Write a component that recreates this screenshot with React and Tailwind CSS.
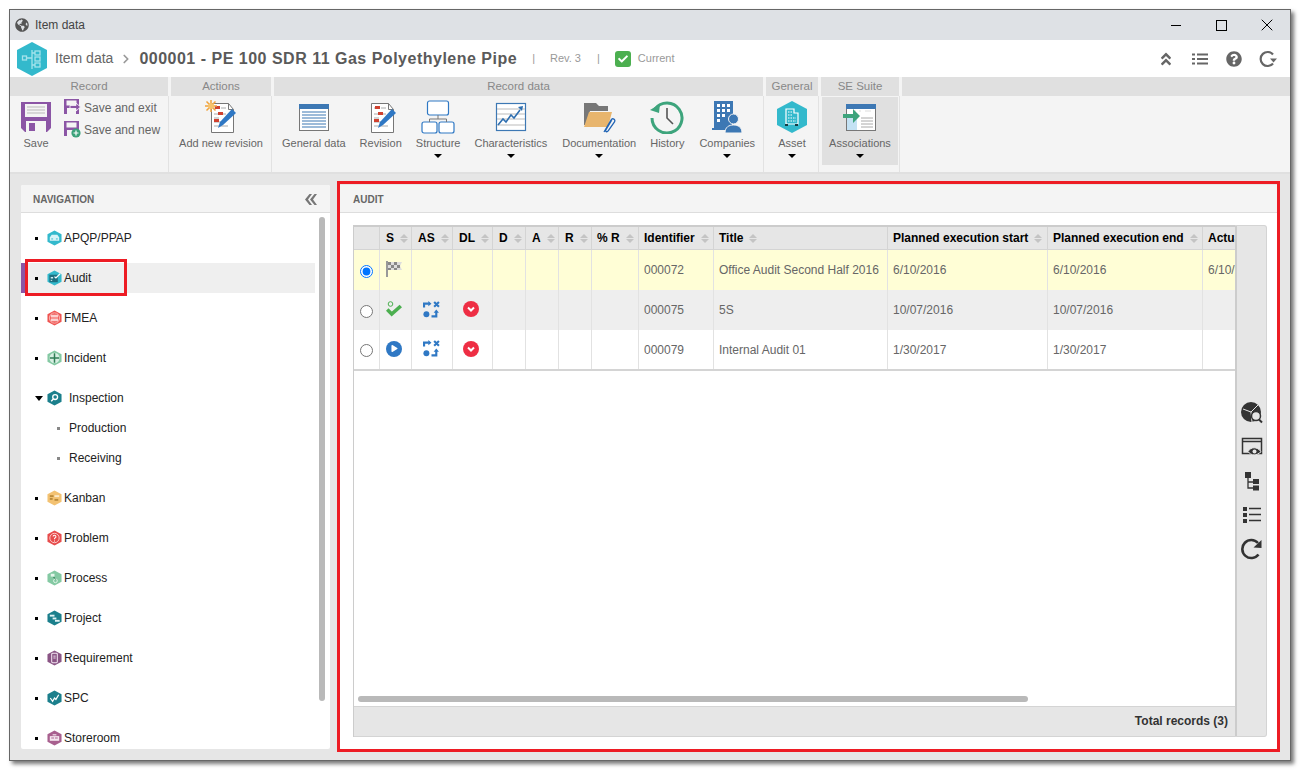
import {
  FaGlobeAmericas,
  FaAngleDoubleUp,
  FaQuestionCircle,
  FaPlay,
  FaCheck,
} from "react-icons/fa";
import { ChevronRight, X } from "lucide-react";

const Hex = ({ fill, children }) => (
  <svg viewBox="0 0 16 16" className="w-[15px] h-[16px] shrink-0">
    <polygon points="8,0 15.5,4 15.5,12 8,16 0.5,12 0.5,4" fill={fill} />
    {children}
  </svg>
);

const navIcons = {
  apqp: (
    <Hex fill="#33b9cc">
      <path d="M3 11V7.500L5 4.500h6L13 7.500V11z" fill="#d8f3f7" />
      <rect x="4.500" y="8.500" width="2" height="1" fill="#33b9cc" />
      <rect x="9.500" y="8.500" width="2" height="1" fill="#33b9cc" />
    </Hex>
  ),
  audit: (
    <Hex fill="#33b9cc">
      <rect x="2.500" y="4.500" width="9" height="8" fill="#1d6f80" />
      <rect x="4" y="7" width="2.500" height="1.500" fill="#d8f3f7" />
      <rect x="4" y="10" width="1.500" height="1" fill="#d8f3f7" />
      <path d="M8 6.500l1.500 1.500L14 3.500" stroke="#fff" strokeWidth="1.300" fill="none" />
    </Hex>
  ),
  fmea: (
    <Hex fill="#ef5350">
      <circle cx="8" cy="8" r="5.500" fill="none" stroke="#fbd0cf" strokeWidth="0.800" />
      <rect x="4" y="4.500" width="8" height="3" fill="#fbd0cf" />
      <rect x="4" y="8.500" width="8" height="3" fill="#fbd0cf" />
    </Hex>
  ),
  incident: (
    <Hex fill="#84c9a3">
      <circle cx="8" cy="8" r="5.500" fill="#d7efe2" />
      <path d="M8 3v10M3 8h10" stroke="#2f7d55" strokeWidth="1.600" />
    </Hex>
  ),
  inspection: (
    <Hex fill="#1b7f8c">
      <circle cx="8.700" cy="7" r="2.600" stroke="#fff" strokeWidth="1.400" fill="none" />
      <path d="M6.800 9l-2.300 2.400" stroke="#fff" strokeWidth="1.500" />
    </Hex>
  ),
  kanban: (
    <Hex fill="#f3c272">
      <rect x="3" y="5" width="4" height="2" fill="#b98a3a" />
      <rect x="8" y="5" width="5" height="2" fill="#fbeacb" />
      <rect x="3" y="8" width="3" height="2" fill="#b98a3a" />
      <rect x="8" y="9" width="4" height="2" fill="#b98a3a" />
    </Hex>
  ),
  problem: (
    <Hex fill="#e74c4c">
      <circle cx="8" cy="8" r="5" fill="none" stroke="#fbd0cf" strokeWidth="1" />
      <path d="M6.500 6.500a1.500 1.500 0 1 1 2 1.500l-.5.600v.600M8 10.600v1" stroke="#fff" strokeWidth="1.100" fill="none" />
    </Hex>
  ),
  process: (
    <Hex fill="#84c9a3">
      <rect x="4" y="3.500" width="4" height="3" fill="#e4f5eb" />
      <path d="M7 7l3 3" stroke="#2f7d55" strokeWidth="1.300" />
      <circle cx="9" cy="11" r="2" fill="none" stroke="#e4f5eb" />
    </Hex>
  ),
  project: (
    <Hex fill="#1b7f8c">
      <rect x="3" y="4.500" width="5" height="2" fill="#e2f3f5" />
      <rect x="6" y="7.500" width="4" height="2" fill="#e2f3f5" />
      <rect x="8.500" y="10" width="5" height="2" fill="#e2f3f5" />
    </Hex>
  ),
  requirement: (
    <Hex fill="#8a5585">
      <rect x="5" y="3" width="6" height="10" rx="1" fill="none" stroke="#f2e4f1" strokeWidth="1.100" />
      <path d="M6.800 6h2.400M6.800 8h2.400" stroke="#f2e4f1" />
    </Hex>
  ),
  spc: (
    <Hex fill="#1b7f8c">
      <path d="M3.500 8l2.500 3.500L8 8l1.500 1.500L12.500 4.500" stroke="#fff" strokeWidth="1.300" fill="none" />
    </Hex>
  ),
  storeroom: (
    <Hex fill="#a8608f">
      <rect x="3" y="6" width="10" height="5" fill="#f4e6ef" />
      <rect x="4.500" y="7.500" width="3" height="1" fill="#a8608f" />
      <rect x="8.500" y="7.500" width="3" height="1" fill="#a8608f" />
      <rect x="6" y="4" width="4" height="1.200" fill="#f4e6ef" />
    </Hex>
  ),
};

const SaveIcon = () => (
  <svg viewBox="0 0 30 30" className="w-[30px] h-[30px]">
    <path d="M0 0h30v26l-4 4H4l-4-4z" fill="#8b55a5" />
    <rect x="4" y="2" width="22" height="13" fill="#f4f4f4" />
    <path d="M6 5h18M6 8h18M6 11h18" stroke="#b9b9b9" />
    <rect x="5" y="19" width="20" height="11" fill="#f4f4f4" />
    <rect x="8" y="21" width="6" height="8" fill="#8b55a5" />
  </svg>
);

const SmallSave = ({ badge }) => (
  <svg viewBox="0 0 17 17" className="w-[17px] h-[17px] shrink-0">
    <path d="M0 0h15v15H0z" fill="#8b55a5" />
    <rect x="2.500" y="1.500" width="10" height="5" fill="#f4f4f4" />
    <rect x="3" y="9" width="9" height="6" fill="#f4f4f4" />
    {badge ? (
      <g>
        <circle cx="12" cy="12" r="4.600" fill="#3ba27a" />
        <path d="M12 9.500v5M9.500 12h5" stroke="#fff" strokeWidth="1.200" />
      </g>
    ) : (
      <path d="M6 6.500h6V4l4.500 4L12 12V9.500H6z" fill="#8b55a5" stroke="#fff" strokeWidth="0.800" />
    )}
  </svg>
);

const DocIcon = ({ star }) => (
  <svg viewBox="0 0 34 34" className="w-[34px] h-[34px]">
    <path d="M7.500 3.500h17l5 6v23h-22z" fill="#fff" stroke="#777" />
    <path d="M24.500 3.500v6h5" fill="none" stroke="#777" />
    <path d="M10 8h4M17 8h5M10 14h12M10 18h5M10 22h9M10 26h14" stroke="#aaa" />
    <rect x="11" y="6" width="5" height="3" fill="#d0412f" />
    <rect x="14" y="12" width="5" height="3" fill="#d0412f" />
    <rect x="10" y="19" width="5" height="3" fill="#d0412f" />
    <path d="M14 28l2-6L28 9l4 4-13 12z" fill="#2f78c4" />
    {star && (
      <g stroke="#f0a23c" strokeWidth="1.500">
        <path d="M7 0v12M1 6h12M2.500 1.500l9 9M11.500 1.500l-9 9" />
        <circle cx="7" cy="6" r="3" fill="#f6c26b" strokeWidth="0" />
      </g>
    )}
  </svg>
);

const GeneralIcon = () => (
  <svg viewBox="0 0 34 34" className="w-[34px] h-[34px]">
    <rect x="2.500" y="4.500" width="29" height="26" fill="#fff" stroke="#777" />
    <rect x="2" y="4" width="30" height="5" fill="#3d78b4" />
    <path d="M5 12h24M5 15h24M5 18h24M5 21h24M5 24h24M5 27h24" stroke="#3d78b4" strokeWidth="1.200" />
  </svg>
);

const StructureIcon = () => (
  <svg viewBox="0 0 34 34" className="w-[34px] h-[34px]">
    <g fill="#fff" stroke="#2f78c4" strokeWidth="1.200">
      <rect x="6.500" y="1" width="21" height="14" rx="2" />
      <rect x="1" y="22" width="15" height="11" rx="2" />
      <rect x="18" y="22" width="15" height="11" rx="2" />
    </g>
    <path d="M17 15v4M8.500 22v-3h17v3" fill="none" stroke="#777" />
  </svg>
);

const CharIcon = () => (
  <svg viewBox="0 0 34 34" className="w-[34px] h-[34px]">
    <rect x="2.500" y="3.500" width="29" height="27" fill="#fff" stroke="#3d78b4" strokeWidth="1.200" />
    <path d="M3 9h28M3 14h28M3 19h28M3 25h28" stroke="#bbb" />
    <path d="M4 25l5-6 3 3 5-7 3 3 6-8" fill="none" stroke="#2f6fb0" strokeWidth="1.600" />
    <path d="M24 7l5-1-1 5z" fill="#2f6fb0" />
  </svg>
);

const DocsIcon = () => (
  <svg viewBox="0 0 34 34" className="w-[34px] h-[34px]">
    <path d="M2 3h12l3 3h9v5H8l-4 14H2z" fill="#777" />
    <path d="M7 12h23l-4 15H2z" fill="#e8b56d" />
    <path d="M22 32l7-12c1.500-2.500 5-.5 3.500 2L26 31c-1 1.500-3 .5-2.200-1l6-10" fill="none" stroke="#1f63b4" strokeWidth="1.300" />
  </svg>
);

const HistoryIcon = () => (
  <svg viewBox="0 0 34 34" className="w-[34px] h-[34px]">
    <path d="M5 9A15 15 0 1 1 2 18" fill="none" stroke="#3da47c" strokeWidth="3" />
    <path d="M0 10l9 3 1-9z" fill="#3da47c" />
    <path d="M17 8v10l6 6" fill="none" stroke="#555" strokeWidth="1.600" />
  </svg>
);

const CompaniesIcon = () => (
  <svg viewBox="0 0 34 34" className="w-[34px] h-[34px]">
    <path d="M4 1h19v19h-1v10H2v-2h2z" fill="#3d78b4" />
    <g fill="#fff">
      <rect x="7" y="4" width="3" height="3" />
      <rect x="12" y="4" width="3" height="3" />
      <rect x="17" y="4" width="3" height="3" />
      <rect x="7" y="9" width="3" height="3" />
      <rect x="12" y="9" width="3" height="3" />
      <rect x="17" y="9" width="3" height="3" />
      <rect x="7" y="14" width="3" height="3" />
      <rect x="12" y="14" width="3" height="3" />
      <rect x="7" y="19" width="3" height="3" />
    </g>
    <circle cx="23.500" cy="19" r="5" fill="#3d78b4" stroke="#f4f4f4" />
    <path d="M15 33c0-6 4-8 8.500-8S32 27 32 33z" fill="#3d78b4" stroke="#f4f4f4" />
  </svg>
);

const AssetIcon = () => (
  <svg viewBox="2 0 30 34" className="w-[30px] h-[34px]">
    <polygon points="17,1 32,9 32,25 17,33 2,25 2,9" fill="#33b9cc" />
    <path d="M11 9h8v4h4v11H11z" fill="none" stroke="#fff" strokeWidth="1.200" />
    <path d="M13 12h4M13 15h4M13 18h8M13 21h8" stroke="#fff" strokeDasharray="1.500 1" />
    <rect x="10" y="24" width="3" height="2" fill="#173b44" />
    <rect x="20" y="24" width="3" height="2" fill="#173b44" />
  </svg>
);

const AssocIcon = () => (
  <svg viewBox="0 0 34 34" className="w-[34px] h-[34px]">
    <rect x="3.500" y="4.500" width="29" height="26" fill="#fff" stroke="#777" />
    <rect x="3" y="4" width="30" height="5" fill="#3d78b4" />
    <rect x="4" y="18" width="10" height="12" fill="#c4e2f4" />
    <path d="M18 18h12M18 21h12M18 24h12M18 27h12" stroke="#aaa" />
    <path d="M22 11h6M16 11h2M11 11h2" stroke="#ddd" />
    <path d="M0 15h10v-5l7 7-7 7v-5H0z" transform="translate(0 -1)" fill="#3da47c" />
  </svg>
);

const Caret = () => (
  <span className="w-0 h-0 border-x-[4px] border-x-transparent border-t-[4px] border-t-black" />
);

const RibbonButton = ({ icon, label, caret, active }) => (
  <div
    className={
      active
        ? "flex flex-col items-center w-[76px] h-[68px] bg-[#e0e0e0]"
        : "flex flex-col items-center px-[7px] h-[68px]"
    }
  >
    <div className="h-[38px] pt-[2px] flex items-center justify-center">{icon}</div>
    <span className="text-[11px] leading-[14px] mt-[1px] text-[#666] whitespace-nowrap">
      {label}
    </span>
    {caret && (
      <span className="mt-[4px] flex">
        <Caret />
      </span>
    )}
  </div>
);

const RibbonGroup = ({ title, width, center, children }) => (
  <div className={`flex flex-col shrink-0 ${width}`}>
    <div className="h-[19px] mr-[3px] bg-[#e0e0e0] text-[11.5px] leading-[19px] text-center text-[#888]">
      {title}
    </div>
    <div
      className={
        center
          ? "flex-1 mr-[2px] border-r border-[#e2e2e2] flex justify-center pt-[1px]"
          : "flex-1 mr-[2px] border-r border-[#e2e2e2] flex pt-[1px] pl-[1px]"
      }
    >
      {children}
    </div>
  </div>
);

const navItems = [
  { key: "apqp", label: "APQP/PPAP" },
  { key: "audit", label: "Audit", active: true },
  { key: "fmea", label: "FMEA" },
  { key: "incident", label: "Incident" },
  { key: "inspection", label: "Inspection", open: true },
  { key: "kanban", label: "Kanban" },
  { key: "problem", label: "Problem" },
  { key: "process", label: "Process" },
  { key: "project", label: "Project" },
  { key: "requirement", label: "Requirement" },
  { key: "spc", label: "SPC" },
  { key: "storeroom", label: "Storeroom" },
];

const NavRow = ({ item }) => (
  <div
    className={
      item.active
        ? "flex items-center h-[30px] w-[294px] mb-[10px] bg-[#efefef] border-l-4 border-[#8b55a5] pl-[10px]"
        : item.open
          ? "flex items-center h-[30px] w-[294px] pl-[14px]"
          : "flex items-center h-[30px] w-[294px] mb-[10px] pl-[14px]"
    }
  >
    {item.open ? (
      <span className="w-[8px] mr-[4px] flex">
        <span className="w-0 h-0 border-x-[4px] border-x-transparent border-t-[5px] border-t-black" />
      </span>
    ) : (
      <span className="w-[3px] h-[3px] bg-black mr-[9px]" />
    )}
    {navIcons[item.key]}
    <span className={item.open ? "ml-[7px] text-xs text-[#222]" : "ml-[2px] text-xs text-[#222]"}>
      {item.label}
    </span>
  </div>
);

const SubRow = ({ label }) => (
  <div className="flex items-center h-[30px] pl-[36px]">
    <span className="w-[3px] h-[3px] bg-[#888] mr-[9px]" />
    <span className="text-xs text-[#222]">{label}</span>
  </div>
);

const columns = [
  "",
  "S",
  "AS",
  "DL",
  "D",
  "A",
  "R",
  "% R",
  "Identifier",
  "Title",
  "Planned execution start",
  "Planned execution end",
  "Actual execution start",
];

const gridCols =
  "grid grid-cols-[26px_32px_41px_40px_33px_33px_33px_47px_75px_174px_160px_155px_150px] w-[999px]";

const SortIcon = () => (
  <span className="flex flex-col gap-[1px] shrink-0">
    <span className="w-0 h-0 border-x-[4px] border-x-transparent border-b-[4px] border-b-[#c4c4c4]" />
    <span className="w-0 h-0 border-x-[4px] border-x-transparent border-t-[4px] border-t-[#c4c4c4]" />
  </span>
);

const FlagIcon = () => (
  <svg viewBox="0 0 16 16" className="w-[16px] h-[16px]">
    <rect x="0" y="0" width="2" height="16" fill="#999" />
    <path d="M2 1h14l-2 4 2 4H2z" fill="#ddd" />
    <path d="M2 1h3v3H2zM8 1h3v3H8zM5 4h3v3H5zM11 4h3v3h-3zM2 7h3v2H2zM8 7h3v2H8z" fill="#888" />
  </svg>
);

const DoneIcon = () => (
  <svg viewBox="0 0 16 16" className="w-[16px] h-[16px]">
    <circle cx="4.500" cy="3" r="2.300" fill="none" stroke="#4caf50" />
    <path d="M1.200 8.500l4.500 4.500L14.800 5" fill="none" stroke="#4caf50" strokeWidth="3.600" />
  </svg>
);

const PlayIcon = () => (
  <span className="w-[16px] h-[16px] rounded-full bg-[#2f78c4] flex items-center justify-center">
    <FaPlay className="w-[7px] h-[7px] text-white ml-[1px]" />
  </span>
);

const FlowIcon = () => (
  <svg viewBox="0 0 16 16" className="w-[17px] h-[17px]">
    <g fill="none" stroke="#2f78c4" strokeWidth="2">
      <path d="M1 6V2.500h4.500M10.500 1l4.500 4.500M15 1l-4.500 4.500" />
      <path d="M8 14.500h4.500V10" />
    </g>
    <path d="M5 0l3 2.500L5 5zM10 11l2.500-3 2.500 3z" fill="#2f78c4" />
    <circle cx="3.200" cy="12.500" r="2.800" fill="#2f78c4" />
  </svg>
);

const DelayIcon = () => (
  <span className="w-[16px] h-[16px] rounded-full bg-[#ee2e44] flex items-center justify-center">
    <svg viewBox="0 0 10 10" className="w-[10px] h-[10px]">
      <path d="M2 3.500l3 3 3-3" fill="none" stroke="#fff" strokeWidth="2" />
    </svg>
  </span>
);

const rows = [
  {
    bg: "bg-[#fffed6]",
    checked: true,
    status: <FlagIcon />,
    id: "000072",
    title: "Office Audit Second Half 2016",
    start: "6/10/2016",
    end: "6/10/2016",
    actual: "6/10/2016",
    h: "h-[40px]",
  },
  {
    bg: "bg-[#eeeeee]",
    status: <DoneIcon />,
    flow: true,
    id: "000075",
    title: "5S",
    start: "10/07/2016",
    end: "10/07/2016",
    h: "h-[40px]",
  },
  {
    bg: "bg-white",
    status: <PlayIcon />,
    flow: true,
    id: "000079",
    title: "Internal Audit 01",
    start: "1/30/2017",
    end: "1/30/2017",
    h: "h-[39px]",
  },
];

const Cell = ({ children, className = "" }) => (
  <div className={`border-r border-[#e2e2e2] flex items-center overflow-hidden ${className}`}>
    {children}
  </div>
);

const TextCell = ({ children }) => (
  <Cell className="pl-[5px] text-xs text-[#666] whitespace-nowrap">{children}</Cell>
);

const ToolIcon = ({ children }) => (
  <svg viewBox="0 0 22 22" className="w-[22px] h-[22px] text-[#333]">
    {children}
  </svg>
);

const App = () => {
  return (
    <div
      className="relative w-[1301px] h-[771px] overflow-hidden bg-white p-[9px] font-['Liberation_Sans',Arial,sans-serif]"
    >
      <div className="w-[1282px] h-[752px] border border-[#666] shadow-[3px_3px_4px_#777] flex flex-col bg-[#e6e6e6]">
        {/* title bar */}
        <div className="h-[30px] shrink-0 bg-[#dee1e5] flex items-center pl-[5px]">
          <FaGlobeAmericas className="w-[14px] h-[14px] text-[#555]" />
          <span className="ml-[6px] text-xs text-[#444]">Item data</span>
          <div className="ml-auto flex items-center h-full pr-[13px] text-black">
            <span className="w-[10px] h-px bg-black" />
            <span className="ml-[35px] w-[11px] h-[11px] border border-black" />
            <X className="ml-[30px] w-[20px] h-[20px]" strokeWidth={1.2} />
          </div>
        </div>

        {/* header */}
        <div className="h-[37px] shrink-0 bg-white flex items-center pl-[7px]">
          <svg viewBox="0 0 30 34" className="w-[30px] h-[34px]">
            <polygon points="15,0 30,8 30,26 15,34 0,26 0,8" fill="#33b9cc" />
            <g fill="none" stroke="#a5e3ec" strokeWidth="1.300">
              <rect x="5.500" y="14" width="4" height="4" />
              <rect x="18" y="9" width="5" height="4" />
              <rect x="18" y="15" width="5" height="4" />
              <rect x="18" y="21" width="5" height="4" />
              <path d="M9.500 16H15M15 8v19M15 11h3M15 23h3" />
            </g>
          </svg>
          <span className="ml-[8px] text-[14px] text-[#666]">Item data</span>
          <ChevronRight className="w-[14px] h-[14px] ml-[6px] text-[#999]" strokeWidth={3} />
          <span className="ml-[6px] text-[16px] font-bold tracking-[0.5px] text-[#5a5a5a] whitespace-nowrap">
            000001 - PE 100 SDR 11 Gas Polyethylene Pipe
          </span>
          <span className="ml-[15px] text-[11px] text-[#999]">|</span>
          <span className="ml-[15px] text-[11px] text-[#999]">Rev. 3</span>
          <span className="ml-[16px] text-[11px] text-[#999]">|</span>
          <span className="ml-[15px] w-[16px] h-[16px] rounded-[3px] bg-[#4caf50] flex items-center justify-center">
            <FaCheck className="w-[10px] h-[10px] text-white" />
          </span>
          <span className="ml-[7px] text-[11px] text-[#999]">Current</span>
          <div className="ml-auto flex items-center pr-[13px] text-[#666]">
            <FaAngleDoubleUp className="w-[14px] h-[16px]" />
            <svg viewBox="0 0 16 12" className="w-[16px] h-[12px] ml-[19px]">
              <path d="M0 1.500h3M5 1.500h11M0 6h3M5 6h11M0 10.500h3M5 10.500h11" stroke="#666" strokeWidth="2" />
            </svg>
            <FaQuestionCircle className="w-[16px] h-[16px] ml-[18px]" />
            <svg viewBox="0 0 18 18" className="w-[18px] h-[18px] ml-[17px]">
              <path d="M14 13.500A7 7 0 1 1 14 4.500" fill="none" stroke="#666" strokeWidth="2.200" />
              <path d="M11 8.500h7l-3.500 4z" fill="#666" />
            </svg>
          </div>
        </div>

        {/* ribbon */}
        <div className="h-[97px] shrink-0 bg-[#f4f4f4] border-b-2 border-[#e0e0e0] flex">
          <RibbonGroup title="Record" width="w-[161px]">
            <div className="ml-[3px]">
              <RibbonButton icon={<SaveIcon />} label="Save" />
            </div>
            <div className="flex flex-col pt-[2px] pl-[6px] gap-[5px]">
              <div className="flex items-center gap-[3px]">
                <SmallSave />
                <span className="text-xs text-[#666] whitespace-nowrap">Save and exit</span>
              </div>
              <div className="flex items-center gap-[3px]">
                <SmallSave badge />
                <span className="text-xs text-[#666] whitespace-nowrap">Save and new</span>
              </div>
            </div>
          </RibbonGroup>
          <RibbonGroup title="Actions" width="w-[103px]" center>
            <RibbonButton icon={<DocIcon star />} label="Add new revision" />
          </RibbonGroup>
          <RibbonGroup title="Record data" width="w-[492px]">
            <RibbonButton icon={<GeneralIcon />} label="General data" />
            <RibbonButton icon={<DocIcon />} label="Revision" />
            <RibbonButton icon={<StructureIcon />} label="Structure" caret />
            <RibbonButton icon={<CharIcon />} label="Characteristics" caret />
            <div className="ml-[1px]">
              <RibbonButton icon={<DocsIcon />} label="Documentation" caret />
            </div>
            <RibbonButton icon={<HistoryIcon />} label="History" />
            <div className="ml-[1px]">
              <RibbonButton icon={<CompaniesIcon />} label="Companies" caret />
            </div>
          </RibbonGroup>
          <RibbonGroup title="General" width="w-[55px]" center>
            <RibbonButton icon={<AssetIcon />} label="Asset" caret />
          </RibbonGroup>
          <RibbonGroup title="SE Suite" width="w-[81px]">
            <RibbonButton icon={<AssocIcon />} label="Associations" caret active />
          </RibbonGroup>
          <div className="flex-1 h-[19px] bg-[#e0e0e0]" />
        </div>

        {/* content */}
        <div className="flex-1 min-h-0 flex pt-[11px] pl-[11px] pb-[11px] pr-[12px] gap-[9px]">
          {/* navigation */}
          <div className="relative w-[309px] shrink-0 bg-white rounded-[2px] flex flex-col overflow-hidden">
            <div className="h-[28px] shrink-0 bg-[#f4f4f4] border-b border-[#ddd] flex items-center pl-[12px] pr-[13px] pt-[1px]">
              <span className="text-[10px] font-bold text-[#666]">NAVIGATION</span>
              <svg viewBox="0 0 13 11" className="ml-auto w-[13px] h-[11px]">
                <path d="M5.500 0L1 5.500 5.500 11h2.500L4 5.500 8 0zM10.500 0L6 5.500 10.500 11H13L9 5.500 13 0z" fill="#777" />
              </svg>
            </div>
            <div className="flex-1 min-h-0 overflow-hidden pt-[10px]">
              {navItems.map((item) => (
                <div key={item.key}>
                  <NavRow item={item} />
                  {item.open && (
                    <div className="mb-[10px]">
                      <SubRow label="Production" />
                      <SubRow label="Receiving" />
                    </div>
                  )}
                </div>
              ))}
            </div>
            <div className="absolute top-[32px] left-[298px] w-[6px] h-[484px] rounded-[3px] bg-[#b9b9b9]" />
          </div>

          {/* audit panel */}
          <div className="flex-1 min-w-0 bg-white rounded-[2px] flex flex-col overflow-hidden">
            <div className="h-[28px] shrink-0 bg-[#f4f4f4] border-b border-[#ddd] flex items-center pl-[14px] pt-[1px]">
              <span className="text-[10px] font-bold text-[#666]">AUDIT</span>
            </div>
            <div className="flex-1 min-h-0 flex pt-[12px] pb-[12px] pl-[14px] pr-[11px]">
              {/* table */}
              <div className="relative w-[882px] flex flex-col border-l border-t-2 border-[#ccc] overflow-hidden">
                <div className={`${gridCols} h-[23px] bg-[#e6e6e6] border-b border-[#d4d4d4] shrink-0`}>
                  {columns.map((col, i) => (
                    <div
                      key={i}
                      className={
                        i < 7
                          ? "border-r border-[#d4d4d4] flex items-center pl-[6px] gap-[6px] text-xs font-bold text-black whitespace-nowrap overflow-hidden"
                          : "border-r border-[#d4d4d4] flex items-center pl-[5px] gap-[6px] text-xs font-bold text-black whitespace-nowrap overflow-hidden"
                      }
                    >
                      {col}
                      {col && <SortIcon />}
                    </div>
                  ))}
                </div>
                {rows.map((row) => (
                  <div key={row.id} className={`${gridCols} ${row.h} ${row.bg} shrink-0`}>
                    <Cell className="justify-center">
                      <input type="radio" name="audit" checked={!!row.checked} readOnly className="w-[13px] h-[13px] m-0 mt-[2px]" />
                    </Cell>
                    <Cell className="pl-[6px] pb-[2px]">{row.status}</Cell>
                    <Cell className="justify-center pb-[2px] pr-[1px]">{row.flow && <FlowIcon />}</Cell>
                    <Cell className="pl-[10px] pb-[2px]">{row.flow && <DelayIcon />}</Cell>
                    <Cell />
                    <Cell />
                    <Cell />
                    <Cell />
                    <TextCell>{row.id}</TextCell>
                    <TextCell>{row.title}</TextCell>
                    <TextCell>{row.start}</TextCell>
                    <TextCell>{row.end}</TextCell>
                    <TextCell>{row.actual}</TextCell>
                  </div>
                ))}
                <div className="h-[2px] w-full bg-[#d4d4d4] shrink-0" />
                <div className="flex-1 min-h-0 bg-white" />
                <div className="absolute left-[4px] bottom-[35px] w-[670px] h-[6px] rounded-[3px] bg-[#b9b9b9]" />
                <div className="h-[31px] shrink-0 bg-[#e6e6e6] border-y border-[#d4d4d4] flex items-center justify-end pr-[7px] pb-[2px] text-xs font-bold text-[#333]">
                  Total records (3)
                </div>
              </div>

              {/* side toolbar */}
              <div className="w-[32px] shrink-0 bg-[#e6e6e6] border-l-2 border-[#ccc] border-y border-r border-y-[#d4d4d4] border-r-[#d4d4d4] rounded-r-[3px] flex flex-col items-center justify-center gap-[12px]">
                <ToolIcon>
                  <circle cx="10" cy="10" r="10" fill="#333" />
                  <path d="M10 10L2 7M10 10l7-7M10 10l1 10" stroke="#e6e6e6" strokeWidth="1" />
                  <circle cx="15" cy="14" r="4.500" fill="#e6e6e6" stroke="#333" strokeWidth="1.500" />
                  <path d="M18 17.500l3 3" stroke="#333" strokeWidth="2" />
                </ToolIcon>
                <ToolIcon>
                  <rect x="1.500" y="2.500" width="19" height="15" fill="none" stroke="#333" strokeWidth="1.500" />
                  <path d="M2 5.500h18" stroke="#333" strokeWidth="1.500" />
                  <path d="M7 15.500c3-5 9-5 13 0-4 4.500-10 4.500-13 0z" fill="#333" stroke="#e6e6e6" />
                  <circle cx="13.500" cy="15.500" r="2" fill="#e6e6e6" />
                </ToolIcon>
                <ToolIcon>
                  <path d="M7 8v10h6M7 12h6" fill="none" stroke="#333" strokeWidth="1.300" />
                  <rect x="4" y="2" width="6" height="6" fill="#333" />
                  <rect x="12" y="9" width="6" height="5" fill="#333" />
                  <rect x="12" y="15.500" width="6" height="5" fill="#333" />
                </ToolIcon>
                <ToolIcon>
                  <rect x="2" y="3" width="4" height="4" fill="#333" />
                  <rect x="2" y="9" width="4" height="4" fill="#333" />
                  <rect x="2" y="15" width="4" height="4" fill="#333" />
                  <path d="M8 4.500h12M8 10.500h12M8 16.500h12" stroke="#333" strokeWidth="1.500" />
                </ToolIcon>
                <ToolIcon>
                  <path d="M17.500 16.500A9 9 0 1 1 17 5" fill="none" stroke="#333" strokeWidth="2.600" />
                  <path d="M12.500 9.500L20.500 10V2z" fill="#333" />
                </ToolIcon>
              </div>
            </div>
          </div>
        </div>
      </div>

      {/* red annotation boxes */}
      <div className="absolute left-[337px] top-[181px] w-[943px] h-[571px] border-[3px] border-[#ed1c24]" />
      <div className="absolute left-[25px] top-[259px] w-[102px] h-[37px] border-[3px] border-[#ed1c24]" />
    </div>
  );
};

export default App;
